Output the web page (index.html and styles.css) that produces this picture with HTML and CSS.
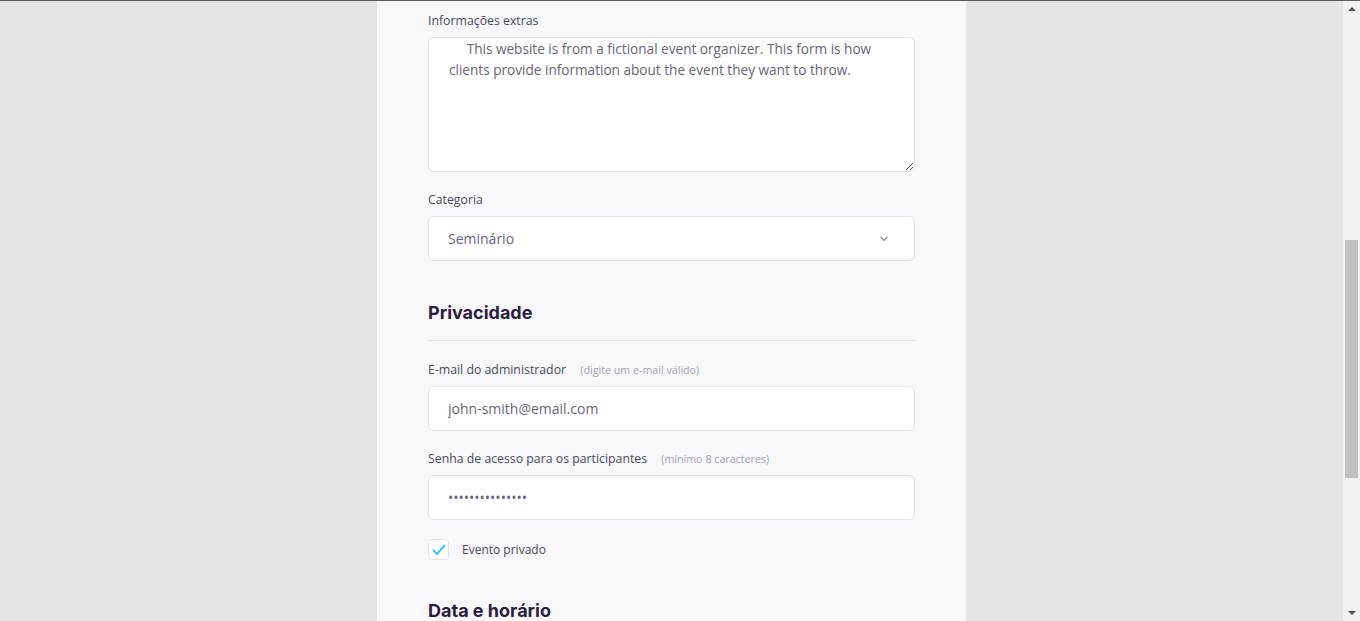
FILE: index.html
```html
<!DOCTYPE html>
<html lang="pt-BR">
<head>
<meta charset="utf-8">
<title>Criar evento</title>
<link rel="stylesheet" href="styles.css">
</head>
<body>
<div class="viewport">
  <main class="page">
    <form class="card">
      <div class="field">
        <label class="label" for="extra">Informações extras</label>
        <textarea id="extra" class="textarea">     This website is from a fictional event organizer. This form is how clients provide information about the event they want to throw.</textarea>
      </div>
      <div class="field">
        <label class="label" for="cat">Categoria</label>
        <div class="select-box">
          <select id="cat" class="select"><option>Seminário</option></select>
          <svg class="chevron" width="10" height="6" viewBox="0 0 10 6"><path d="M1.5 1 L5 4.5 L8.5 1" fill="none" stroke="#8a8a99" stroke-width="1.2"/></svg>
        </div>
      </div>
      <h2 class="section-title">Privacidade</h2>
      <div class="field">
        <label class="label" for="mail">E-mail do administrador <span class="hint">(digite um e-mail válido)</span></label>
        <input id="mail" class="input" type="text" value="john-smith@email.com">
      </div>
      <div class="field">
        <label class="label" for="pass">Senha de acesso para os participantes <span class="hint">(mínimo 8 caracteres)</span></label>
        <input id="pass" class="input input-pass" type="password" value="123456789012345">
      </div>
      <label class="check">
        <span class="check-box"><svg width="14" height="12" viewBox="0 0 14 12"><path d="M1.5 6.5 L5 10 L12.5 1.5" fill="none" stroke="#3cc6f2" stroke-width="2" stroke-linecap="round" stroke-linejoin="round"/></svg></span>
        <span class="check-label">Evento privado</span>
      </label>
      <h2 class="section-title section-next">Data e horário</h2>
    </form>
  </main>
  <div class="scrollbar">
    <span class="arrow arrow-up"></span>
    <div class="track"><div class="thumb"></div></div>
    <span class="arrow arrow-down"></span>
  </div>
</div>
</body>
</html>
```

FILE: styles.css
```css
* { box-sizing: border-box; }
html, body { margin: 0; height: 100%; overflow: hidden; }
body {
  font-family: "Open Sans", "Noto Sans", sans-serif;
  color: #4b4b5c;
  background: #e5e5e5;
}
.viewport {
  display: flex;
  height: 621px;
  border-top: 1px solid #5b5b5b;
}
.page {
  flex: 1;
  display: flex;
  justify-content: center;
  overflow: hidden;
}
.card {
  width: 589px;
  background: #f8f8fa;
  padding: 12px 51px 0;
  display: flex;
  flex-direction: column;
}
.field { display: flex; flex-direction: column; }
.label {
  font-size: 12.3px;
  line-height: 16px;
  color: #4a4a5c;
  margin-bottom: 8px;
}
.hint {
  font-size: 10.7px;
  color: #a3a3b4;
  margin-left: 11px;
}
.textarea {
  height: 135px;
  border: 1px solid #e3e3ec;
  border-radius: 6px;
  background: #fff;
  padding: 0 20px;
  font-family: inherit;
  font-size: 13.6px;
  line-height: 21px;
  color: #666675;
  resize: vertical;
  outline: none;
}
.select-box {
  height: 45px;
  display: flex;
  align-items: center;
  border: 1px solid #e3e3ec;
  border-radius: 6px;
  background: #fff;
  padding: 0 25px 0 19px;
}
.select {
  flex: 1;
  appearance: none;
  -webkit-appearance: none;
  border: none;
  background: transparent;
  font-family: inherit;
  font-size: 14px;
  color: #666675;
  outline: none;
  padding: 0;
}
.chevron { flex: none; }
.section-title {
  font-family: "Inter", "Liberation Sans", sans-serif;
  font-weight: 700;
  font-size: 18px;
  color: #2b1d3e;
  margin: 40px 0 0;
  padding-bottom: 15px;
  border-bottom: 1px solid #e4e4ee;
  line-height: 24px;
}
.section-title + .field { margin-top: 21px; }
.field + .field { margin-top: 20px; }
.input {
  height: 45px;
  border: 1px solid #e3e3ec;
  border-radius: 6px;
  background: #fff;
  padding: 0 19px;
  font-family: inherit;
  font-size: 14px;
  color: #666675;
  outline: none;
}
.check {
  display: flex;
  align-items: center;
  gap: 13px;
  margin-top: 19px;
}
.check-box {
  width: 21px;
  height: 21px;
  border: 1px solid #e3e3ec;
  border-radius: 4px;
  background: #fff;
  display: flex;
  align-items: center;
  justify-content: center;
}
.check-label { font-size: 12px; color: #4a4a5c; }
.section-next { margin-top: 39px; border-bottom: none; }
.scrollbar {
  width: 17px;
  flex: none;
  background: #f1f1f1;
  display: flex;
  flex-direction: column;
  align-items: center;
}
.arrow {
  width: 0; height: 0;
  border-left: 4px solid transparent;
  border-right: 4px solid transparent;
  margin: 6px 0;
}
.arrow-up { border-bottom: 4px solid #505050; }
.arrow-down { border-top: 4px solid #505050; }
.track { flex: 1; width: 100%; padding: 0 2px; }
.thumb {
  margin-top: 223px;
  height: 238px;
  background: #c1c1c1;
}
```
